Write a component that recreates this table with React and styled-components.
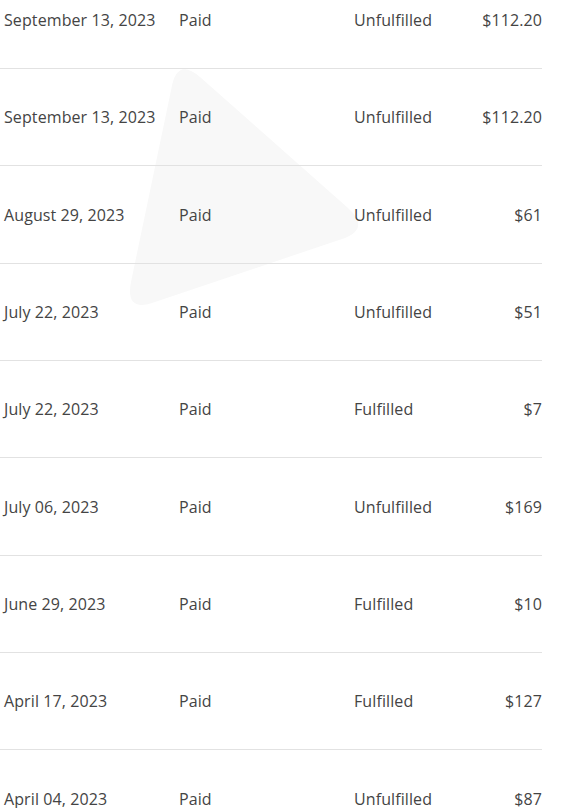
import React from 'react';
import styled, { createGlobalStyle } from 'styled-components';

const Global = createGlobalStyle`
  html, body {
    margin: 0;
    padding: 0;
    background: #ffffff;
    overflow: hidden;
  }
  body {
    font-family: "Open Sans", "Noto Sans", sans-serif;
  }
`;

const Page = styled.div`
  position: relative;
  width: 585px;
  height: 808px;
  overflow: hidden;
`;

const Watermark = styled.svg`
  position: absolute;
  left: 0;
  top: 0;
  z-index: 0;
  pointer-events: none;
`;

const Table = styled.div`
  position: relative;
  z-index: 1;
  width: 542px;
  margin-top: -28.3px;
`;

const Row = styled.div`
  display: grid;
  grid-template-columns: 175px 175px 1fr auto;
  align-items: center;
  height: 97.35px;
  box-sizing: border-box;
  border-bottom: 1px solid #e2e2e2;
`;

const Cell = styled.div`
  padding-left: 4px;
  font-size: 16px;
  letter-spacing: 0.1px;
  color: #444444;
  text-align: ${p => (p.$right ? 'right' : 'left')};
  white-space: nowrap;
`;

const orders = [
  ['September 13, 2023', 'Paid', 'Unfulfilled', '$112.20'],
  ['September 13, 2023', 'Paid', 'Unfulfilled', '$112.20'],
  ['August 29, 2023', 'Paid', 'Unfulfilled', '$61'],
  ['July 22, 2023', 'Paid', 'Unfulfilled', '$51'],
  ['July 22, 2023', 'Paid', 'Fulfilled', '$7'],
  ['July 06, 2023', 'Paid', 'Unfulfilled', '$169'],
  ['June 29, 2023', 'Paid', 'Fulfilled', '$10'],
  ['April 17, 2023', 'Paid', 'Fulfilled', '$127'],
  ['April 04, 2023', 'Paid', 'Unfulfilled', '$87'],
];

const App = () => {
  return (
    <Page>
      <Global />
      <Watermark width="585" height="808" viewBox="0 0 585 808">
        <path
          d="M171.5 88 L131 282 Q125 313 155 302 L342 239 Q371 229 348 208 L200 77 Q177 57 171.5 88 Z"
          fill="#f8f8f8"
        />
      </Watermark>
      <Table>
        {orders.map((o, i) => (
          <Row key={i}>
            <Cell>{o[0]}</Cell>
            <Cell>{o[1]}</Cell>
            <Cell>{o[2]}</Cell>
            <Cell $right>{o[3]}</Cell>
          </Row>
        ))}
      </Table>
    </Page>
  );
};

export default App;
